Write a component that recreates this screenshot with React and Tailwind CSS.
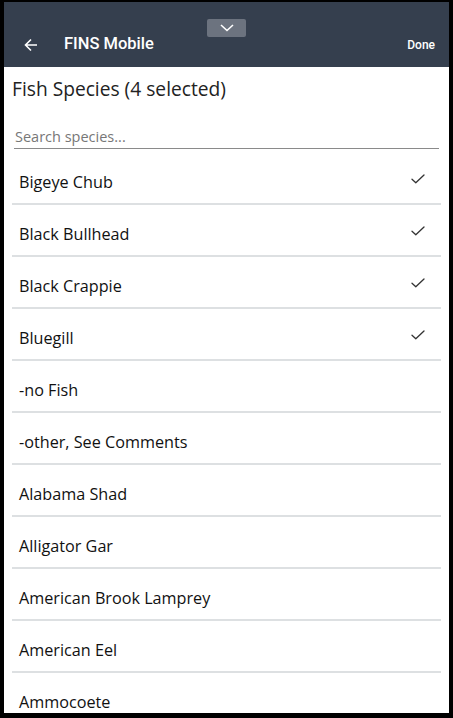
import React from "react";

const species = [
  ["Bigeye Chub", true],
  ["Black Bullhead", true],
  ["Black Crappie", true],
  ["Bluegill", true],
  ["-no Fish", false],
  ["-other, See Comments", false],
  ["Alabama Shad", false],
  ["Alligator Gar", false],
  ["American Brook Lamprey", false],
  ["American Eel", false],
  ["Ammocoete", false],
  ["Atlantic Salmon", false],
];

function Check() {
  return (
    <svg width="14" height="10" viewBox="0 0 14 10" fill="none" className="mb-[6px]">
      <path d="M1 5.2 L4.8 8.8 L13 1" stroke="#333" strokeWidth="1.3" strokeLinecap="round" strokeLinejoin="round" />
    </svg>
  );
}

export default function App() {
  return (
    <div className="h-[718px] w-[453px] bg-black pt-[2px] pl-[4px] pr-[4px] pb-[5px] overflow-hidden">
      <div className="relative flex h-full flex-col overflow-hidden bg-white pb-[4px]" style={{ fontFamily: "'Open Sans', sans-serif" }}>
        <div className="h-[65px] shrink-0 bg-[#353f4e] pt-[20px]">
          <div className="flex h-[45px] items-center" style={{ fontFamily: "Roboto, sans-serif" }}>
            <svg width="14" height="14" viewBox="0 0 14 14" fill="none" className="ml-[20px]">
              <path d="M13 7 H1.5 M7 1.5 L1.5 7 L7 12.5" stroke="white" strokeWidth="1.6" />
            </svg>
            <span className="ml-[26px] text-[16.5px] font-medium text-white">FINS Mobile</span>
            <span className="ml-auto mr-[14px] text-[12px] font-medium text-white">Done</span>
          </div>
        </div>
        <div className="absolute left-[203px] top-[17px] flex h-[18px] w-[39px] items-center justify-center rounded-[2px] bg-[#6c737f]">
          <svg width="14" height="8" viewBox="0 0 14 8" fill="none">
            <path d="M1 1 L7 6.5 L13 1" stroke="white" strokeWidth="1.6" />
          </svg>
        </div>
        <div className="shrink-0 px-[8px] pt-[9px] text-[19.2px] leading-[26px] text-[#222]">Fish Species (4 selected)</div>
        <div className="mx-[10px] mt-[25px] shrink-0 border-b border-[#8a8a8a] pb-[1px] pl-[1px] text-[14.5px] leading-[20px] text-[#777]">
          Search species...
        </div>
        <div className="mt-[4px] flex min-h-0 flex-1 flex-col overflow-hidden px-[8px]">
          {species.map(([name, sel]) => (
            <div key={name} className="flex h-[52px] shrink-0 items-center border-b-2 border-[#dde0e2] pl-[7px] pr-[16px] pt-[8px]">
              <span className="text-[16.2px] font-medium leading-[24px] text-[#111]">{name}</span>
              {sel && <span className="ml-auto flex"><Check /></span>}
            </div>
          ))}
        </div>
      </div>
    </div>
  );
}
